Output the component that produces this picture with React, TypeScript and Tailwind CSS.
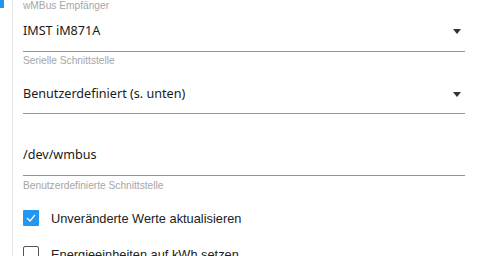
import React from "react";

const Arrow = () => (
  <svg width="8" height="5" viewBox="0 0 8 5" className="mr-[4px] mt-[1px]">
    <polygon points="0,0 8,0 4,5" fill="#333333" />
  </svg>
);

const Label = ({ children, className = "" }: { children: React.ReactNode; className?: string }) => (
  <div
    className={`h-[12px] leading-[12px] text-[10.2px] text-[#a6a6a6] ${className}`}
    style={{ fontFamily: '"Liberation Sans", Arial, sans-serif' }}
  >
    {children}
  </div>
);

const valueFont = { fontFamily: '"Noto Sans", "Open Sans", sans-serif' };

export default function App() {
  return (
    <div className="flex w-[482px] h-[256px] overflow-hidden bg-white">
      <div className="w-[13px] shrink-0 border-r border-[#e4e4e4]">
        <div className="w-[4px] h-[8px] bg-[#2196f3]" />
      </div>
      <div className="flex-1 pl-[10px] pr-[17px] flex flex-col">
        <Label>wMBus Empfänger</Label>
        <div className="pt-[9px] pb-[10px] border-b border-[#949494] flex items-center justify-between">
          <span className="h-[20px] leading-[20px] text-[12.6px] text-[#1a1a1a]" style={valueFont}>
            IMST iM871A
          </span>
          <Arrow />
        </div>
        <Label className="mt-[3px]">Serielle Schnittstelle</Label>
        <div className="pt-[17px] pb-[9px] border-b border-[#949494] flex items-center justify-between">
          <span className="h-[20px] leading-[20px] text-[12.6px] text-[#1a1a1a]" style={valueFont}>
            Benutzerdefiniert (s. unten)
          </span>
          <Arrow />
        </div>
        <div className="mt-[31px] pb-[10px] border-b border-[#949494]">
          <span className="block h-[20px] leading-[20px] text-[12.6px] text-[#1a1a1a]" style={valueFont}>
            /dev/wmbus
          </span>
        </div>
        <Label className="mt-[4px]">Benutzerdefinierte Schnittstelle</Label>
        <div
          className="mt-[18px] flex items-center gap-[12px] h-[16px]"
          style={{ fontFamily: '"Liberation Sans", Arial, sans-serif' }}
        >
          <div className="w-[16px] h-[16px] bg-[#2196f3] rounded-[1px] flex items-center justify-center">
            <svg width="10" height="8" viewBox="0 0 10 8">
              <polyline points="1,4 4,7 9,1" fill="none" stroke="white" strokeWidth="1.2" />
            </svg>
          </div>
          <span className="text-[12.8px] text-[#222] mt-[1px]">Unveränderte Werte aktualisieren</span>
        </div>
        <div
          className="mt-[20px] flex items-center gap-[12px] h-[16px]"
          style={{ fontFamily: '"Liberation Sans", Arial, sans-serif' }}
        >
          <div className="w-[16px] h-[16px] border-[1.5px] border-[#555] rounded-[2px]" />
          <span className="text-[12.8px] text-[#222] mt-[1px]">Energieeinheiten auf kWh setzen</span>
        </div>
      </div>
    </div>
  );
}
